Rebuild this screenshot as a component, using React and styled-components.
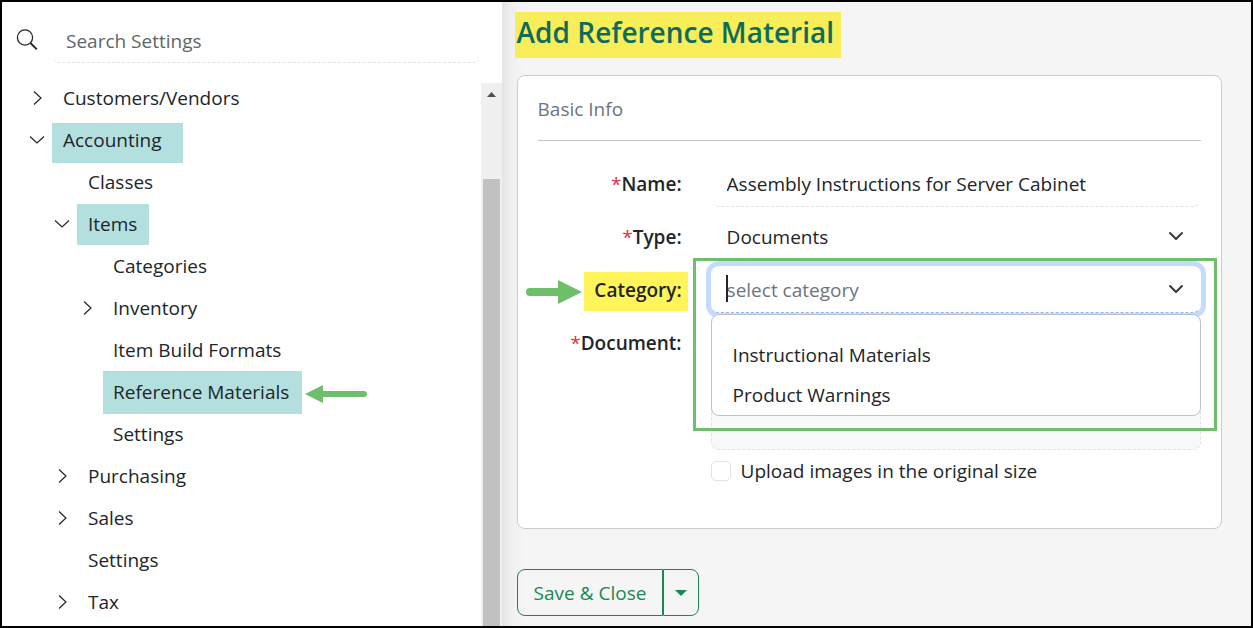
import { Component } from "react";
import styled, { createGlobalStyle, css } from "styled-components";

const GlobalStyle = createGlobalStyle`
  * {
    box-sizing: border-box;
  }
  body {
    margin: 0;
    background: #fff;
  }
  body, button, input, select {
    font-family: "Open Sans", "Noto Sans", sans-serif;
    font-size: 19px;
    line-height: 28px;
    color: #212529;
  }
`;

const Frame = styled.div`
  display: flex;
  height: 100vh;
  border: 2px solid #000;
  overflow: hidden;
`;

const Sidebar = styled.aside`
  display: flex;
  flex-direction: column;
  flex: 0 0 40%;
  min-width: 0;
  background: #fff;
`;

const SearchBar = styled.label`
  display: flex;
  align-items: center;
  gap: 14px;
  padding: 14px 21px 0 14px;
`;

const SearchInput = styled.input`
  flex: 1;
  min-width: 0;
  height: 47px;
  padding: 2px 13px 0;
  border: 1px dashed transparent;
  border-bottom-color: #dee2e6;
  border-radius: 8px;
  outline: none;
  background: transparent;
  &::placeholder {
    color: #5f656b;
    opacity: 1;
  }
`;

const SidebarBody = styled.div`
  display: flex;
  flex: 1;
  min-height: 0;
`;

const Tree = styled.ul`
  flex: 1;
  margin: 0;
  padding: 14px 0 0;
  list-style: none;
  overflow: hidden;
`;

const TreeRow = styled.li`
  display: flex;
  align-items: center;
  gap: 14px;
  height: 42px;
  padding-left: ${(props) => 23 + props.$level * 25}px;
`;

const Toggle = styled.button`
  display: flex;
  align-items: center;
  justify-content: center;
  width: 24px;
  height: 24px;
  padding: 0;
  border: 0;
  background: transparent;
  visibility: ${(props) => (props.$empty ? "hidden" : "visible")};
`;

const highlight = css`
  position: relative;
  isolation: isolate;
  &::before {
    content: "";
    position: absolute;
    z-index: -1;
    inset: ${(props) => props.$mark};
    background: ${(props) => props.$markColor || "#b3e0de"};
    pointer-events: none;
  }
`;

const TreeLink = styled.a`
  color: inherit;
  text-decoration: none;
  white-space: nowrap;
  ${(props) => props.$mark && highlight}
`;

const TreeArrow = styled.svg`
  margin: 4px 0 0 2px;
`;

const ScrollTrack = styled.div`
  display: flex;
  flex-direction: column;
  width: 21px;
  margin-top: 20px;
  padding: 0 2px;
  background: #f0f0f0;
`;

const ScrollUp = styled.button`
  height: 96px;
  padding: 9px 0 0;
  border: 0;
  background: transparent;
  display: flex;
  justify-content: center;
  align-items: flex-start;
`;

const ScrollThumb = styled.div`
  flex: 1;
  background: #c1c1c1;
`;

const Main = styled.main`
  flex: 1;
  min-width: 0;
  padding: 10px 29px 0 15px;
  background: linear-gradient(to right, #e4e4e4, #f0f0f0 10px, #f5f5f5 22px);
`;

const Title = styled.h1`
  width: fit-content;
  margin: 0 0 23px;
  font-size: 28px;
  line-height: 40px;
  font-weight: 600;
  color: #0f6b5c;
  white-space: nowrap;
  ${highlight}
`;

const Card = styled.section`
  padding: 19px 20px 43px;
  border: 1px solid #ccc;
  border-radius: 8px;
  background: #fff;
`;

const CardTitle = styled.h2`
  margin: 0 0 19px;
  padding-bottom: 17px;
  border-bottom: 1px solid #c3c4c5;
  font-size: 19px;
  line-height: 28px;
  font-weight: 400;
  color: #6c757d;
`;

const FormGrid = styled.div`
  display: grid;
  grid-template-columns: 144px 1fr;
  column-gap: 29px;
  row-gap: 6px;
`;

const Label = styled.label`
  justify-self: end;
  padding: 10px 0 9px;
  font-weight: 600;
  white-space: nowrap;
  ${(props) => props.$mark && highlight}
`;

const Required = styled.span`
  color: #dc3545;
  font-weight: 400;
`;

const LabelArrow = styled.svg`
  position: absolute;
  right: calc(100% + 12px);
  top: 14px;
`;

const Field = styled.div`
  position: relative;
  display: flex;
  align-items: center;
  min-width: 0;
`;

const Control = styled.input`
  width: 100%;
  height: 47px;
  padding: 0 15px;
  border: 1px dashed transparent;
  border-bottom-color: ${(props) => (props.$focused ? "#86b7fe" : "#dee2e6")};
  border-radius: 8px;
  outline: none;
  background: #fff;
  appearance: none;
  box-shadow: ${(props) => (props.$focused ? "0 0 0 5px #c2dbfe" : "none")};
  &::placeholder {
    color: #6c757d;
    opacity: 1;
  }
`;

const FieldChevron = styled.svg`
  position: absolute;
  right: 17px;
  top: 15px;
  pointer-events: none;
`;

const Caret = styled.span`
  position: absolute;
  left: 15px;
  top: 9px;
  width: 2px;
  height: 27px;
  background: #212529;
`;

const Menu = styled.ul`
  position: absolute;
  z-index: 2;
  top: 48px;
  left: 0;
  right: 0;
  margin: 0;
  padding: 20px 0 0;
  list-style: none;
  border: 1px solid #bfc1c3;
  border-radius: 8px;
  background: #fff;
`;

const MenuItem = styled.li`
  padding: 6px 21px;
`;

const Callout = styled.div`
  position: absolute;
  z-index: 3;
  inset: -8px -16px -118px -18px;
  border: 3px solid #6fbf6a;
  pointer-events: none;
`;

const DropZone = styled.div`
  height: 131px;
  border: 1px dashed #dee2e6;
  border-radius: 8px;
  background: #f8f9fa;
`;

const CheckLine = styled.label`
  grid-column: 2;
  display: flex;
  align-items: center;
  gap: 10px;
  padding-top: 1px;
`;

const Checkbox = styled.input`
  appearance: none;
  width: 20px;
  height: 20px;
  margin: 0;
  border: 1px solid #dee2e6;
  border-radius: 5px;
  background: #fff;
`;

const ButtonGroup = styled.div`
  display: flex;
  width: fit-content;
  margin-top: 40px;
`;

const ActionButton = styled.button`
  display: flex;
  align-items: center;
  height: 47px;
  padding: 0 16px;
  border: 1px solid #198754;
  border-radius: 8px 0 0 8px;
  background: transparent;
  color: #198754;
`;

const SplitButton = styled(ActionButton)`
  padding: 0 11px;
  border-radius: 0 8px 8px 0;
`;

const treeData = [
  { label: "Customers/Vendors", level: 0, state: "closed" },
  { label: "Accounting", level: 0, state: "open", mark: "-3px -21px -9px -11px" },
  { label: "Classes", level: 1 },
  { label: "Items", level: 1, state: "open", mark: "-6px -12px -7px -11px" },
  { label: "Categories", level: 2 },
  { label: "Inventory", level: 2, state: "closed" },
  { label: "Item Build Formats", level: 2 },
  { label: "Reference Materials", level: 2, mark: "-7px -13px -8px -10px", arrow: true },
  { label: "Settings", level: 2 },
  { label: "Purchasing", level: 1, state: "closed" },
  { label: "Sales", level: 1, state: "closed" },
  { label: "Settings", level: 1 },
  { label: "Tax", level: 1, state: "closed" },
];

const Chevron = ({ open }) => (
  <svg width="16" height="16" viewBox="0 0 16 16" fill="none" stroke="#212529" strokeWidth="1.2">
    <path d={open ? "M1 4.5 8 11 15 4.5" : "M5 1.5 12 8 5 14.5"} />
  </svg>
);

const SelectChevron = () => (
  <FieldChevron width="16" height="16" viewBox="0 0 16 16" fill="none">
    <path
      d="m2 5 6 6 6-6"
      stroke="#343a40"
      strokeWidth="2"
      strokeLinecap="round"
      strokeLinejoin="round"
    />
  </FieldChevron>
);

class SettingsTree extends Component {
  render() {
    return (
      <Tree>
        {treeData.map((item, index) => (
          <TreeRow key={index} $level={item.level}>
            <Toggle
              type="button"
              $empty={!item.state}
              aria-label={`Toggle ${item.label}`}
              aria-expanded={item.state === "open"}
            >
              <Chevron open={item.state === "open"} />
            </Toggle>
            <TreeLink href="#" $mark={item.mark}>
              {item.label}
            </TreeLink>
            {item.arrow && (
              <TreeArrow width="62" height="18" viewBox="0 0 62 18" fill="#6fbf6a">
                <path d="M0 9 18 0v6h41a3 3 0 0 1 0 6H18v6z" />
              </TreeArrow>
            )}
          </TreeRow>
        ))}
      </Tree>
    );
  }
}

class ReferenceForm extends Component {
  constructor(props) {
    super(props);
    this.state = {
      name: "Assembly Instructions for Server Cabinet",
      category: "",
      original: false,
    };
  }

  handleChangeName = (event) => {
    this.setState({ name: event.target.value });
  };

  handleChangeCategory = (event) => {
    this.setState({ category: event.target.value });
  };

  handleChangeOriginal = (event) => {
    this.setState({ original: event.target.checked });
  };

  render() {
    const { name, category, original } = this.state;
    return (
      <Card>
        <CardTitle>Basic Info</CardTitle>
        <FormGrid>
          <Label htmlFor="name">
            <Required>*</Required>Name:
          </Label>
          <Field>
            <Control id="name" value={name} onChange={this.handleChangeName} />
          </Field>

          <Label htmlFor="type">
            <Required>*</Required>Type:
          </Label>
          <Field>
            <Control as="select" id="type" defaultValue="Documents">
              <option>Documents</option>
            </Control>
            <SelectChevron />
          </Field>

          <Label htmlFor="category" $mark="6px -6px 2px -10px" $markColor="#fff55a">
            <LabelArrow width="56" height="24" viewBox="0 0 56 24" fill="#6fbf6a">
              <path d="M4 8h28V0l24 12-24 12v-8H4a4 4 0 0 1 0-8z" />
            </LabelArrow>
            Category:
          </Label>
          <Field>
            <Control
              id="category"
              role="combobox"
              aria-expanded="true"
              aria-controls="category-menu"
              placeholder="select category"
              value={category}
              onChange={this.handleChangeCategory}
              $focused
            />
            <Caret />
            <SelectChevron />
            <Menu id="category-menu" role="listbox">
              <MenuItem role="option">Instructional Materials</MenuItem>
              <MenuItem role="option">Product Warnings</MenuItem>
            </Menu>
            <Callout />
          </Field>

          <Label as="span">
            <Required>*</Required>Document:
          </Label>
          <DropZone />

          <CheckLine>
            <Checkbox type="checkbox" checked={original} onChange={this.handleChangeOriginal} />
            Upload images in the original size
          </CheckLine>
        </FormGrid>
      </Card>
    );
  }
}

const App = () => (
  <Frame>
    <GlobalStyle />
    <Sidebar>
      <SearchBar>
        <svg width="22" height="22" viewBox="0 0 22 22" fill="none" stroke="#212529" strokeWidth="1.3">
          <circle cx="9" cy="8.5" r="7.6" />
          <path d="m14.4 14 6.4 6.4" strokeWidth="1.8" />
        </svg>
        <SearchInput type="text" placeholder="Search Settings" aria-label="Search Settings" />
      </SearchBar>
      <SidebarBody>
        <SettingsTree />
        <ScrollTrack>
          <ScrollUp type="button" aria-label="Scroll up">
            <svg width="9" height="5" viewBox="0 0 9 5" fill="#505050">
              <path d="M4.5 0 9 5H0z" />
            </svg>
          </ScrollUp>
          <ScrollThumb />
        </ScrollTrack>
      </SidebarBody>
    </Sidebar>
    <Main>
      <Title $mark="0 -7px -6px -2px" $markColor="#f7ee59">
        Add Reference Material
      </Title>
      <ReferenceForm />
      <ButtonGroup>
        <ActionButton type="button">Save &amp; Close</ActionButton>
        <SplitButton type="button" aria-label="More save options">
          <svg width="12" height="6" viewBox="0 0 12 6" fill="#198754">
            <path d="M0 0h12L6 6z" />
          </svg>
        </SplitButton>
      </ButtonGroup>
    </Main>
  </Frame>
);

export default App;
